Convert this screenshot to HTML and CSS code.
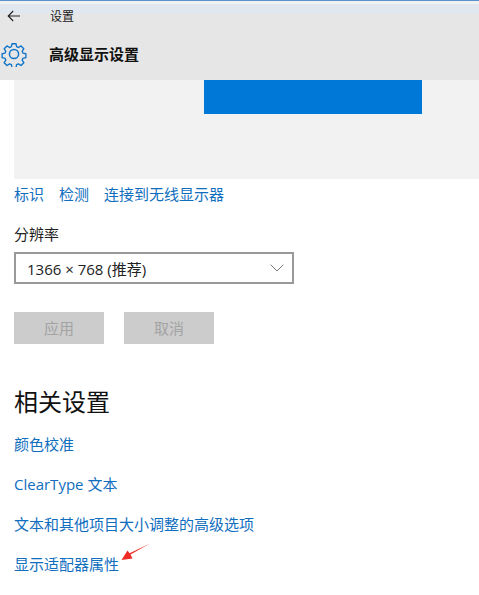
FILE: index.html
```
<!DOCTYPE html>
<html lang="zh-CN">
<head>
<meta charset="utf-8">
<title>高级显示设置</title>
<link rel="stylesheet" href="styles.css">
</head>
<body>
<div class="page">
  <header class="header">
    <div class="titlebar">
      <svg class="back" width="14" height="12" viewBox="0 0 14 12" fill="none" stroke="#222" stroke-width="1.1"><path d="M13 6H1.2M6.2 1 1.2 6l5 5"/></svg>
      <span class="app">设置</span>
    </div>
    <div class="pagehead">
      <svg class="gear" width="26" height="26" viewBox="0 0 26 26" fill="none" stroke="#0f74c8" stroke-width="1.5" stroke-linejoin="round"><path d="M10.8 1.6h4.4l.7 3.3 2 .9 2.9-1.8 3.1 3.1-1.8 2.9.8 2 3.3.7v4.4l-3.3.7-.8 2 1.8 2.9-3.1 3.1-2.9-1.8-2 .8-.7 3.3h-4.4l-.7-3.3-2-.8-2.9 1.8-3.1-3.1 1.8-2.9-.8-2-3.3-.7v-4.4l3.3-.7.8-2-1.8-2.9 3.1-3.1 2.9 1.8 2-.9z" transform="translate(1.3 1.3) scale(.9)"/><circle cx="13" cy="13" r="4.6"/></svg>
      <span class="pagetitle">高级显示设置</span>
    </div>
  </header>
  <main class="content">
    <div class="preview"><div class="monitor"></div></div>
    <nav class="actions">
      <a>标识</a><a>检测</a><a>连接到无线显示器</a>
    </nav>
    <div class="label">分辨率</div>
    <div class="select">
      <span>1366 × 768 (推荐)</span>
      <svg width="14" height="8" viewBox="0 0 14 8" fill="none" stroke="#767676" stroke-width="1"><path d="M.7.7 7 7l6.3-6.3"/></svg>
    </div>
    <div class="buttons">
      <div class="button">应用</div>
      <div class="button">取消</div>
    </div>
    <h2 class="section">相关设置</h2>
    <ul class="links">
      <li>颜色校准</li>
      <li>ClearType 文本</li>
      <li>文本和其他项目大小调整的高级选项</li>
      <li>显示适配器属性</li>
    </ul>
  </main>
  <svg class="annotation" width="30" height="18" viewBox="0 0 30 18"><path d="M29 .5 9.5 11.5 11.5 15.5 0.5 17 6.5 7.5 8.6 10.3z" fill="#ee2b24"/></svg>
</div>
</body>
</html>
```
FILE: styles.css
```
* { box-sizing: border-box; }
html, body { margin: 0; padding: 0; background: #fff; }
body { font-family: "Open Sans", "Noto Sans CJK SC", sans-serif; }
.page { position: relative; width: 479px; height: 595px; overflow: hidden; }
.header { height: 80px; background: #e6e6e6; border-top: 1px solid #5b93c9; display: flex; flex-direction: column; }
.titlebar { height: 30px; display: flex; align-items: center; padding-left: 7px; background: linear-gradient(#f1f2f2 0, #f1f2f2 3px, #e1e7ee 3px, #e1e7ee 12px, #e6e6e6 13px); }
.back { flex: none; }
.app { margin-left: 29px; font-size: 12px; color: #222; }
.pagehead { flex: 1; display: flex; align-items: center; padding: 0 0 4px 1px; }
.gear { flex: none; }
.pagetitle { margin-left: 22px; font-size: 15px; font-weight: 700; color: #111; }
.content { padding-left: 14px; }
.preview { height: 99px; background: #f2f2f2; padding-left: 190px; }
.monitor { width: 218px; height: 34px; background: #0078d7; }
.actions { display: flex; gap: 15px; margin-top: 5px; height: 20px; line-height: 20px; font-size: 15px; color: #106ebe; }
.label { margin-top: 20px; height: 20px; line-height: 20px; font-size: 15px; color: #222; }
.select { margin-top: 8px; width: 280px; height: 32px; border: 2px solid #999; display: flex; align-items: center; justify-content: space-between; padding: 0 8px 0 11px; font-size: 15px; color: #222; }
.buttons { display: flex; gap: 20px; margin-top: 28px; }
.button { width: 90px; height: 32px; background: #ccc; color: #a3a3a3; font-size: 15px; line-height: 32px; text-align: center; }
.section { margin: 41px 0 0; height: 34px; line-height: 34px; font-size: 24px; font-weight: 400; color: #111; }
.links { list-style: none; margin: 15px 0 0; padding: 0; color: #106ebe; font-size: 15px; }
.links li { height: 20px; line-height: 20px; margin-bottom: 20px; }
.annotation { position: absolute; left: 121px; top: 543px; }
```
